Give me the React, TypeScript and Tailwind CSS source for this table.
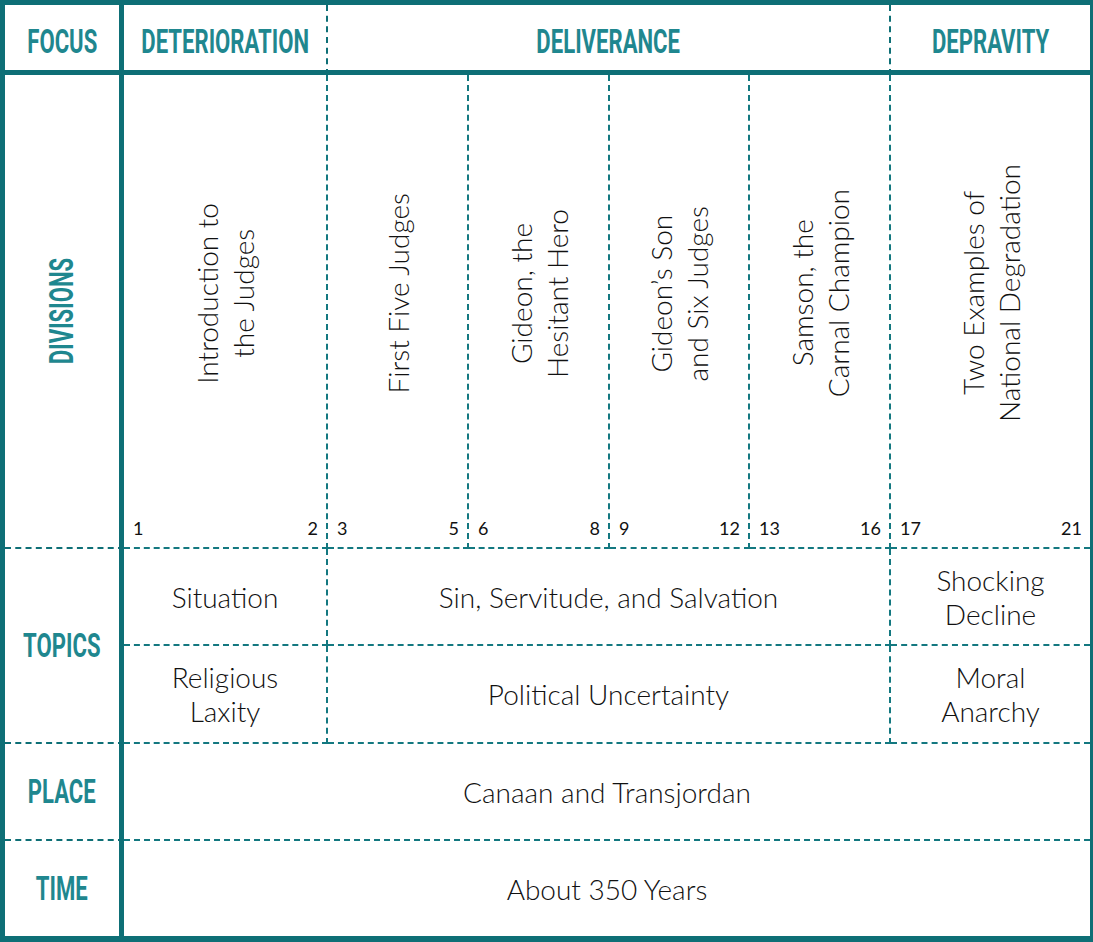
import React from "react";

const divisions = [
  { lines: ["Introduction to", "the Judges"], from: "1", to: "2" },
  { lines: ["First Five Judges"], from: "3", to: "5" },
  { lines: ["Gideon, the", "Hesitant Hero"], from: "6", to: "8" },
  { lines: ["Gideon’s Son", "and Six Judges"], from: "9", to: "12" },
  { lines: ["Samson, the", "Carnal Champion"], from: "13", to: "16" },
  { lines: ["Two Examples of", "National Degradation"], from: "17", to: "21" },
];

function Label({ children }: { children: React.ReactNode }) {
  return (
    <span className="inline-block scale-x-[0.67] font-['Roboto',sans-serif] text-[33px] font-bold leading-none text-[#1f878f] whitespace-nowrap">
      {children}
    </span>
  );
}

function Body({ children }: { children: React.ReactNode }) {
  return (
    <div className="text-center font-['Lato',sans-serif] text-[28px] font-light leading-[34px] text-[#111]">
      {children}
    </div>
  );
}

export default function App() {
  return (
    <div className="w-[1093px] h-[942px] bg-white border-solid border-[#0e6f76] border-t-[5px] border-l-[5px] border-r-[3px] border-b-[6px] grid grid-cols-[119px_204px_141px_141px_140px_141px_199px] grid-rows-[70px_474px_97px_98px_97px_95px]">
      {/* Focus row */}
      <div className="flex items-center justify-center pt-[7px] border-solid border-[#0e6f76] border-r-[5px] border-b-[5px]">
        <Label>FOCUS</Label>
      </div>
      <div className="flex items-center justify-center pt-[7px] border-solid border-[#0e6f76] border-b-[5px] border-r-2 [border-right-style:dashed]">
        <Label>DETERIORATION</Label>
      </div>
      <div className="col-span-4 flex items-center justify-center pt-[7px] border-solid border-[#0e6f76] border-b-[5px] border-r-2 [border-right-style:dashed]">
        <Label>DELIVERANCE</Label>
      </div>
      <div className="flex items-center justify-center pt-[7px] border-solid border-[#0e6f76] border-b-[5px]">
        <Label>DEPRAVITY</Label>
      </div>

      {/* Divisions row */}
      <div className="flex items-center justify-center border-solid border-[#0e6f76] border-r-[5px] border-b-2 [border-bottom-style:dashed]">
        <span className="inline-block -rotate-90">
          <Label>DIVISIONS</Label>
        </span>
      </div>
      {divisions.map((d, i) => (
        <div
          key={d.from}
          className={
            i < 5
              ? "flex flex-col border-dashed border-[#137880] border-r-2 border-b-2"
              : "flex flex-col border-dashed border-[#137880] border-b-2"
          }
        >
          <div className="flex flex-1 items-center justify-center">
            <div className="rotate-180 [writing-mode:vertical-rl] text-center font-['Lato',sans-serif] text-[28px] font-light leading-[36px] text-[#111] whitespace-nowrap">
              {d.lines.map((l) => (
                <div key={l}>{l}</div>
              ))}
            </div>
          </div>
          <div className="flex h-[35px] items-start justify-between pl-[9px] pr-[8px] pt-[3px] font-['Lato',sans-serif] text-[18px] text-[#111]">
            <span>{d.from}</span>
            <span>{d.to}</span>
          </div>
        </div>
      ))}

      {/* Topics */}
      <div className="row-span-2 flex items-center justify-center border-solid border-[#0e6f76] border-r-[5px] border-b-2 [border-bottom-style:dashed]">
        <Label>TOPICS</Label>
      </div>
      <div className="flex items-center justify-center border-dashed border-[#137880] border-r-2 border-b-2">
        <Body>Situation</Body>
      </div>
      <div className="col-span-4 flex items-center justify-center border-dashed border-[#137880] border-r-2 border-b-2">
        <Body>Sin, Servitude, and Salvation</Body>
      </div>
      <div className="flex items-center justify-center border-dashed border-[#137880] border-b-2">
        <Body>
          Shocking
          <br />
          Decline
        </Body>
      </div>
      <div className="flex items-center justify-center border-dashed border-[#137880] border-r-2 border-b-2">
        <Body>
          Religious
          <br />
          Laxity
        </Body>
      </div>
      <div className="col-span-4 flex items-center justify-center border-dashed border-[#137880] border-r-2 border-b-2">
        <Body>Political Uncertainty</Body>
      </div>
      <div className="flex items-center justify-center border-dashed border-[#137880] border-b-2">
        <Body>
          Moral
          <br />
          Anarchy
        </Body>
      </div>

      {/* Place */}
      <div className="flex items-center justify-center border-solid border-[#0e6f76] border-r-[5px] border-b-2 [border-bottom-style:dashed]">
        <Label>PLACE</Label>
      </div>
      <div className="col-span-6 flex items-center justify-center border-dashed border-[#137880] border-b-2">
        <Body>Canaan and Transjordan</Body>
      </div>

      {/* Time */}
      <div className="flex items-center justify-center border-solid border-[#0e6f76] border-r-[5px]">
        <Label>TIME</Label>
      </div>
      <div className="col-span-6 flex items-center justify-center">
        <Body>About 350 Years</Body>
      </div>
    </div>
  );
}
